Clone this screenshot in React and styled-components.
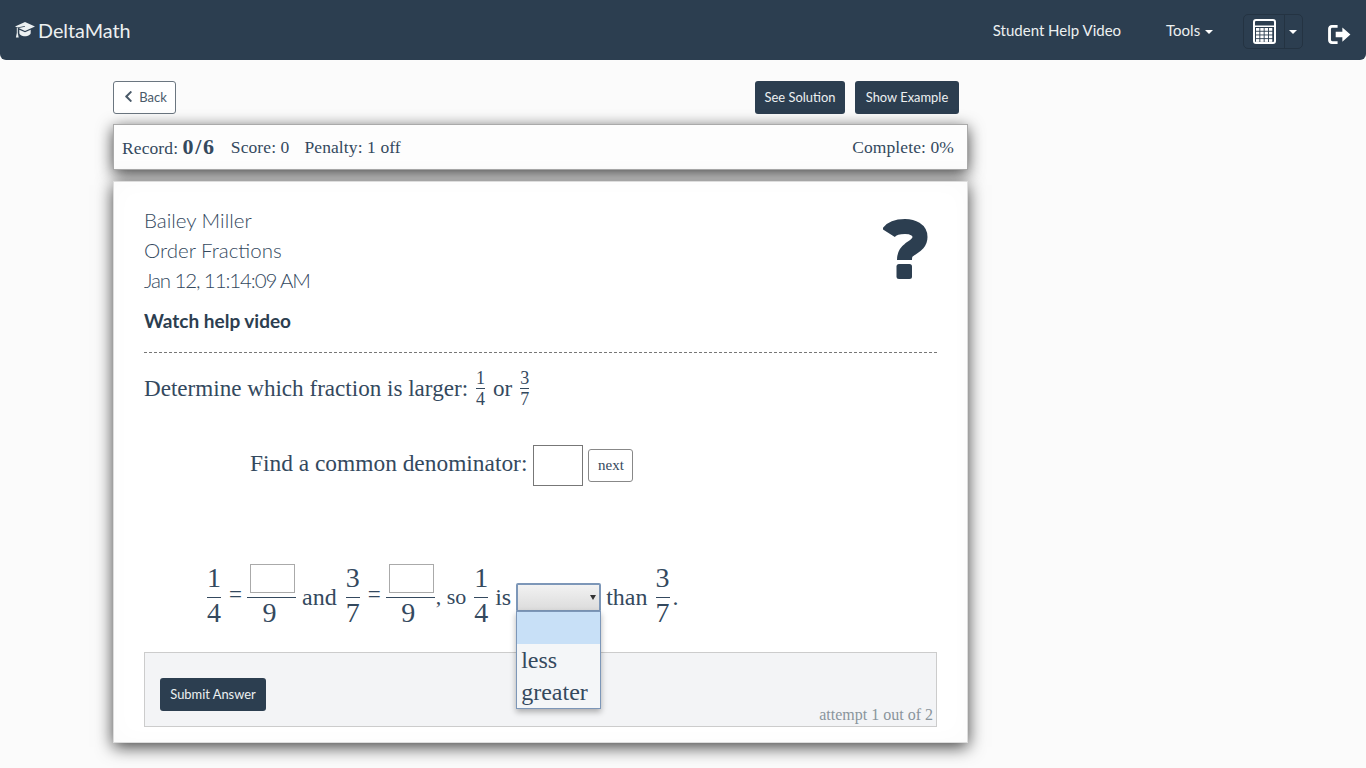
import React from "react";
import styled, { createGlobalStyle } from "styled-components";
import { FaChevronLeft } from "react-icons/fa";

const GlobalStyle = createGlobalStyle`
  html, body {
    margin: 0;
    padding: 0;
    background: #fbfbfb;
    color: #2c3e50;
  }
  body {
    font-family: "Liberation Serif", serif;
    min-height: 768px;
    overflow: hidden;
  }
`;

const CapIcon = () => (
  <svg width="20" height="16" viewBox="0 0 20 16">
    <path fill="#ecf0f1" d="M10 0l10 4.500L10 9 3.600 6.100 10 4.700 9.800 4 2.400 5.600 0 4.500z" />
    <path fill="#ecf0f1" d="M4.300 7.700L10 10.300l5.700-2.600V11c0 1.900-2.800 3.200-5.700 3.200S4.300 12.900 4.300 11z" />
    <path fill="#ecf0f1" d="M1.800 6h1v5l.9 4.600H.9l.9-4.600z" />
  </svg>
);

const CalculatorIcon = () => (
  <svg width="23" height="25" viewBox="0 0 23 25">
    <path
      fill="none"
      stroke="#fff"
      strokeWidth="2"
      d="M3 1h17a2 2 0 0 1 2 2v19a2 2 0 0 1-2 2H3a2 2 0 0 1-2-2V3a2 2 0 0 1 2-2z"
    />
    <path fill="#fff" d="M1 6.500h21V8H1z" />
    {[9.500, 13.200, 16.900, 20.600].map((y) =>
      [3, 7.300, 11.600, 15.900].map((x) => (
        <rect key={`${x}-${y}`} x={x} y={y - 0.500} width="3.400" height="2.800" fill="#fff" />
      ))
    )}
  </svg>
);

const SignOutIcon = () => (
  <svg width="23" height="19" viewBox="0 0 24 20">
    <path
      fill="#fff"
      d="M4 0h6v3H4.500C3.600 3 3 3.600 3 4.500v11c0 .9.600 1.500 1.500 1.500H10v3H4c-2.200 0-4-1.800-4-4V4c0-2.200 1.800-4 4-4z"
    />
    <path fill="#fff" d="M8 7h7V2.500L23.500 10 15 17.500V13H8z" />
  </svg>
);

const QuestionIcon = () => (
  <svg width="45" height="61" viewBox="0 0 45 61">
    <path
      fill="none"
      stroke="#2c3e50"
      strokeWidth="15"
      d="M5.500 14C9 8.500 15 7.500 22 7.500c8 0 15 3.500 15 10.500 0 7-6 9-11 13-3.500 2.500-4.500 5-4.500 10"
    />
    <rect x="13.500" y="45" width="15.500" height="15" rx="2.500" fill="#2c3e50" />
  </svg>
);

const Frac = ({ n, d, small }) => (
  <FracBox $small={small}>
    <FracTop $small={small}>{n}</FracTop>
    <FracBottom $small={small}>{d}</FracBottom>
  </FracBox>
);

const InputFrac = ({ d }) => (
  <FracBox>
    <InputTop>
      <BlankInput />
    </InputTop>
    <FracBottom $offset>{d}</FracBottom>
  </FracBox>
);

export default function App() {
  return (
    <>
      <GlobalStyle />
      <Navbar>
        <Brand>
          <CapIcon />
          DeltaMath
        </Brand>
        <NavRight>
          <NavLink>Student Help Video</NavLink>
          <NavLink $wide>
            Tools <Caret />
          </NavLink>
          <CalcGroup>
            <CalcMain>
              <CalculatorIcon />
            </CalcMain>
            <CalcSide>
              <Caret />
            </CalcSide>
          </CalcGroup>
          <LogoutLink>
            <SignOutIcon />
          </LogoutLink>
        </NavRight>
      </Navbar>

      <Content>
        <TopRow>
          <BackButton>
            <FaChevronLeft size={13} />
            Back
          </BackButton>
          <TopActions>
            <DarkButton $w={90}>See Solution</DarkButton>
            <DarkButton $w={104}>Show Example</DarkButton>
          </TopActions>
        </TopRow>

        <RecordBar>
          <RecordLeft>
            <RecordItem>
              Record: <strong>0/6</strong>
            </RecordItem>
            <span>Score: 0</span>
            <span>Penalty: 1 off</span>
          </RecordLeft>
          <span>Complete: 0%</span>
        </RecordBar>

        <Card>
          <CardHeader>
            <div>
              <HandLine>Bailey Miller</HandLine>
              <HandLine>Order Fractions</HandLine>
              <HandLine $tight>Jan 12, 11:14:09 AM</HandLine>
              <HelpLink>Watch help video</HelpLink>
            </div>
            <QuestionMark>
              <QuestionIcon />
            </QuestionMark>
          </CardHeader>

          <Problem>
            Determine which fraction is larger:
            <Frac small n="1" d="4" />
            or
            <Frac small n="3" d="7" />
          </Problem>

          <FindRow>
            <FindText>Find a common denominator:</FindText>
            <DenomInput />
            <NextButton>next</NextButton>
          </FindRow>

          <EquationRow>
            <Frac n="1" d="4" />
            <Eq>=</Eq>
            <InputFrac d="9" />
            <Word $l={6} $r={9}>and</Word>
            <Frac n="3" d="7" />
            <Eq>=</Eq>
            <InputFrac d="9" />
            <Comma>, so</Comma>
            <Frac n="1" d="4" />
            <Word $l={7} $r={5}>is</Word>
            <SelectWrap>
              <SelectBox>
                <SelectArrow />
              </SelectBox>
              <OptionList>
                <OptionItem $active />
                <OptionItem>less</OptionItem>
                <OptionItem>greater</OptionItem>
              </OptionList>
            </SelectWrap>
            <Word $l={5} $r={8}>than</Word>
            <Frac n="3" d="7" />
            <Dot>.</Dot>
          </EquationRow>

          <SubmitPanel>
            <DarkButton $w={106}>Submit Answer</DarkButton>
            <Attempt>attempt 1 out of 2</Attempt>
          </SubmitPanel>
        </Card>
      </Content>
    </>
  );
}

const Navbar = styled.nav`
  height: 60px;
  background: #2c3e50;
  border-radius: 0 0 6px 6px;
  display: flex;
  align-items: center;
  justify-content: space-between;
  padding: 0 15px;
  color: #ecf0f1;
  font-family: Lato, sans-serif;
`;
const Brand = styled.div`
  display: flex;
  align-items: center;
  gap: 3px;
  font-size: 19.800px;
  color: #ecf0f1;
`;
const NavRight = styled.div`
  display: flex;
  align-items: center;
`;
const NavLink = styled.div`
  font-size: 15px;
  margin-right: ${(p) => (p.$wide ? "30px" : "45px")};
  color: #ecf0f1;
`;
const Caret = styled.span`
  display: inline-block;
  border-top: 4px solid #fff;
  border-left: 4px solid transparent;
  border-right: 4px solid transparent;
  vertical-align: middle;
  margin-left: 1px;
`;
const CalcGroup = styled.div`
  display: flex;
  height: 35px;
  width: 60px;
  box-sizing: border-box;
  border: 1px solid #243342;
  border-radius: 5px;
  margin-top: 3px;
`;
const CalcMain = styled.div`
  width: 40px;
  display: flex;
  align-items: center;
  justify-content: center;
  border-right: 1px solid #243342;
`;
const CalcSide = styled.div`
  flex: 1;
  display: flex;
  align-items: center;
  justify-content: center;
  padding-right: 2px;
`;
const LogoutLink = styled.div`
  margin-left: 25px;
  display: flex;
  margin-top: 8px;
`;

const Content = styled.main`
  width: 855px;
  margin: 21px 0 0 113px;
`;
const TopRow = styled.div`
  display: flex;
  justify-content: space-between;
  padding-right: 9px;
  height: 33px;
`;
const TopActions = styled.div`
  display: flex;
  gap: 10px;
`;
const BackButton = styled.button`
  width: 63px;
  height: 33px;
  box-sizing: border-box;
  border: 1px solid #6b7680;
  border-radius: 3px;
  background: #fff;
  color: #4a5a69;
  font-family: Lato, sans-serif;
  font-size: 13px;
  display: flex;
  align-items: center;
  justify-content: center;
  gap: 4px;
  padding: 0 0 2px;
`;
const DarkButton = styled.button`
  width: ${(p) => p.$w}px;
  height: 33px;
  padding: 0 0 2px;
  border: 0;
  border-radius: 3px;
  background: #2c3e50;
  color: #ecf0f1;
  font-family: Lato, sans-serif;
  font-size: 12.900px;
`;
const RecordBar = styled.div`
  margin-top: 10px;
  height: 46px;
  box-sizing: border-box;
  background: #fdfdfd;
  border: 1px solid #aaa;
  box-shadow: 0 4px 16px rgba(0, 0, 0, 0.75);
  display: flex;
  align-items: center;
  justify-content: space-between;
  padding: 0 13px 0 8px;
  font-size: 17.500px;
  letter-spacing: 0.100px;
  color: #34495e;
  position: relative;
`;
const RecordLeft = styled.div`
  display: flex;
  align-items: center;
  gap: 15px;
`;
const RecordItem = styled.span`
  strong {
    font-size: 22px;
    letter-spacing: 1.700px;
  }
`;
const Card = styled.section`
  margin-top: 11px;
  height: 562px;
  box-sizing: border-box;
  padding: 23px 30px 15px;
  background: #fff;
  border: 1px solid #ddd;
  box-shadow: 0 4px 16px rgba(0, 0, 0, 0.75), inset 0 0 24px rgba(0, 0, 0, 0.02);
  position: relative;
  display: flex;
  flex-direction: column;
`;
const CardHeader = styled.div`
  display: flex;
  justify-content: space-between;
  border-bottom: 1px dashed #777;
  height: 149px;
  box-sizing: border-box;
`;
const HandLine = styled.div`
  font-family: Lato, sans-serif;
  font-weight: 300;
  font-size: 20.500px;
  letter-spacing: ${(p) => (p.$tight ? "-1.100px" : "0")};
  line-height: 30px;
  color: #34495e;
`;
const HelpLink = styled.div`
  font-family: Lato, sans-serif;
  font-weight: 700;
  font-size: 19px;
  line-height: 30px;
  margin-top: 11px;
  color: #2c3e50;
`;
const QuestionMark = styled.div`
  height: 61px;
  margin: 14px 9px 0 0;
`;
const Problem = styled.div`
  display: flex;
  align-items: center;
  gap: 8px;
  height: 36px;
  margin-top: 17px;
  font-size: 23.100px;
  color: #34495e;
`;
const FindRow = styled.div`
  display: flex;
  align-items: center;
  margin: 39px 0 0 106px;
  height: 41px;
  font-size: 23.400px;
  color: #34495e;
`;
const FindText = styled.span`
  padding-bottom: 5px;
`;
const DenomInput = styled.div`
  width: 50px;
  height: 41px;
  box-sizing: border-box;
  border: 1px solid #777;
  background: #fff;
  margin-left: 6px;
`;
const NextButton = styled.button`
  width: 45px;
  height: 33px;
  box-sizing: border-box;
  margin: 0 0 0 5px;
  padding: 0;
  background: #fff;
  border: 1px solid #888;
  border-radius: 3px;
  font-family: "Liberation Serif", serif;
  font-size: 15px;
  color: #34495e;
`;
const EquationRow = styled.div`
  display: flex;
  align-items: center;
  margin: 78px 0 0 63px;
  height: 62px;
  font-size: 24px;
  color: #34495e;
`;
const FracBox = styled.span`
  display: inline-flex;
  flex-direction: column;
  align-items: stretch;
  text-align: center;
  line-height: 1;
  font-size: ${(p) => (p.$small ? "18px" : "28px")};
`;
const FracTop = styled.span`
  border-bottom: 1px solid #34495e;
  padding-bottom: ${(p) => (p.$small ? "1px" : "5px")};
`;
const FracBottom = styled.span`
  padding-top: 1px;
  padding-right: ${(p) => (p.$offset ? "4px" : "0")};
`;
const InputTop = styled.span`
  display: flex;
  justify-content: center;
  border-bottom: 1px solid #34495e;
  padding: 0 1px 4px 3px;
`;
const BlankInput = styled.span`
  width: 45px;
  height: 29px;
  box-sizing: border-box;
  border: 1px solid #aaa;
  background: #fff;
`;
const Eq = styled.span`
  margin: 0 5px 0 8px;
  font-size: 23px;
`;
const Word = styled.span`
  margin: 4px ${(p) => p.$r}px 0 ${(p) => p.$l}px;
`;
const Comma = styled.span`
  margin: 4px 8px 0 1px;
  font-size: 22px;
`;
const Dot = styled.span`
  margin: 4px 0 0 3px;
`;
const SelectWrap = styled.div`
  position: relative;
  width: 85px;
  height: 29px;
  margin-top: 4px;
`;
const SelectBox = styled.div`
  height: 29px;
  box-sizing: border-box;
  border: 2px solid #7d97b8;
  border-radius: 2px;
  background: linear-gradient(#f2f2f2, #dcdcdc);
  position: relative;
`;
const SelectArrow = styled.span`
  position: absolute;
  right: 3px;
  top: 10px;
  border-top: 5px solid #333;
  border-left: 3px solid transparent;
  border-right: 3px solid transparent;
`;
const OptionList = styled.div`
  position: absolute;
  left: 0;
  top: 28px;
  width: 85px;
  height: 98px;
  box-sizing: border-box;
  border: 1px solid #7d97b8;
  background: #f4f6f8;
  box-shadow: 0 3px 6px rgba(0, 0, 0, 0.3);
  z-index: 2;
`;
const OptionItem = styled.div`
  height: 32px;
  line-height: 32px;
  padding-left: 4px;
  background: ${(p) => (p.$active ? "#c8e0f7" : "transparent")};
  font-size: 24px;
  color: #34495e;
`;
const SubmitPanel = styled.div`
  margin-top: 26px;
  height: 75px;
  box-sizing: border-box;
  background: #f3f4f6;
  border: 1px solid #ccc;
  padding: 25px 0 0 15px;
  position: relative;
`;
const Attempt = styled.span`
  position: absolute;
  right: 3px;
  bottom: 2px;
  font-size: 16px;
  color: #8a949c;
`;
